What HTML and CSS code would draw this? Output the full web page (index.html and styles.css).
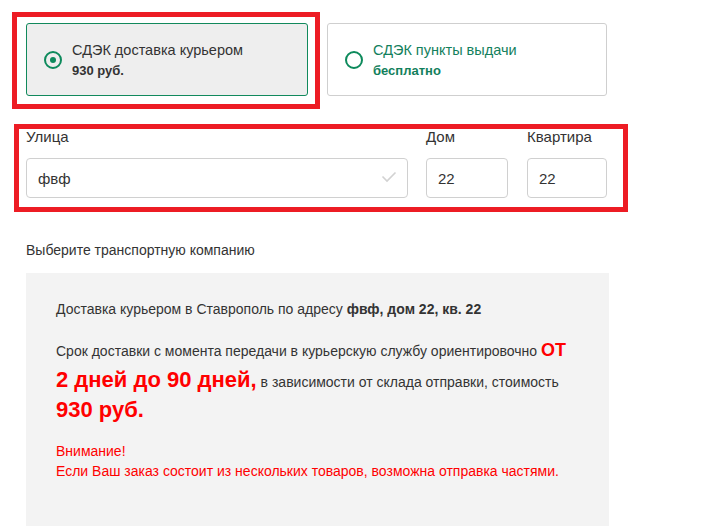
FILE: index.html
```html
<!DOCTYPE html>
<html lang="ru">
<head>
<meta charset="utf-8">
<link rel="stylesheet" href="styles.css">
</head>
<body>
<div class="page">
  <div class="cards">
    <div class="mark mark-cards">
      <label class="card card-active">
        <span class="radio radio-on"></span>
        <span class="card-text">
          <span class="card-title">СДЭК доставка курьером</span>
          <span class="card-price">930 руб.</span>
        </span>
      </label>
    </div>
    <label class="card card-idle">
      <span class="radio"></span>
      <span class="card-text">
        <span class="card-title green">СДЭК пункты выдачи</span>
        <span class="card-price green">бесплатно</span>
      </span>
    </label>
  </div>

  <div class="mark mark-form">
    <div class="form-row">
      <div class="field field-street">
        <div class="field-label">Улица</div>
        <div class="input">
          <span>фвф</span>
          <svg class="check" width="16" height="12" viewBox="0 0 16 12"><path d="M1.5 5.5 L6 10 L14.5 1.5" fill="none" stroke="#d2d2d2" stroke-width="1.6"/></svg>
        </div>
      </div>
      <div class="field field-house">
        <div class="field-label">Дом</div>
        <div class="input"><span>22</span></div>
      </div>
      <div class="field field-flat">
        <div class="field-label">Квартира</div>
        <div class="input"><span>22</span></div>
      </div>
    </div>
  </div>

  <div class="choose">Выберите транспортную компанию</div>

  <div class="info">
    <p class="addr">Доставка курьером в Ставрополь по адресу <b>фвф, дом 22, кв. 22</b></p>
    <p class="term">Срок доставки с момента передачи в курьерскую службу ориентировочно <b class="hot hot-sm">ОТ</b><br><b class="hot">2 дней до 90 дней,</b> в зависимости от склада отправки, стоимость<br><b class="hot">930 руб.</b></p>
    <p class="warn">Внимание!<br>Если Ваш заказ состоит из нескольких товаров, возможна отправка частями.</p>
  </div>
</div>
</body>
</html>
```

FILE: styles.css
```css
* { box-sizing: border-box; }
html, body { margin: 0; padding: 0; background: #fff; }
body {
  font-family: "Liberation Sans", Arial, sans-serif;
  color: #333;
  font-size: 14px;
}
.page {
  padding: 12px 0 0 12px;
  width: 640px;
}
.mark { border: 5px solid #ed1c24; }

.cards {
  display: flex;
  align-items: flex-start;
  gap: 7px;
}
.mark-cards {
  padding: 6px 7px 8px 9px;
  width: 308px;
}
.card {
  display: flex;
  align-items: center;
  height: 73px;
  border-radius: 3px;
  padding-left: 17px;
}
.card-active {
  width: 282px;
  background: #eeeeee;
  border: 1px solid #11895c;
}
.card-idle {
  width: 280px;
  margin-top: 11px;
  background: #fff;
  border: 1px solid #cfcfcf;
}
.radio {
  width: 18px;
  height: 18px;
  border: 2px solid #0d8a5c;
  border-radius: 50%;
  display: flex;
  align-items: center;
  justify-content: center;
  flex: none;
}
.radio-on::after {
  content: "";
  width: 6px;
  height: 6px;
  border-radius: 50%;
  background: #0d8a5c;
}
.card-text {
  display: flex;
  flex-direction: column;
  margin-left: 10px;
  margin-top: 1px;
}
.card-title { font-size: 14.5px; line-height: 18px; color: #333; }
.card-price { font-size: 13px; font-weight: bold; line-height: 16px; margin-top: 4px; color: #333; }
.green { color: #13805c; }

.mark-form {
  margin-top: 15px;
  margin-left: 2px;
  width: 614px;
  padding: 2px 16px 9px 7px;
}
.form-row {
  display: flex;
}
.field-label {
  font-size: 15px;
  line-height: 12px;
  height: 27px;
}
.field-street { width: 382px; }
.field-house { width: 82px; margin-left: 18px; }
.field-flat { width: 80px; margin-left: 19px; }
.input {
  height: 40px;
  border: 1px solid #d0d0d0;
  border-radius: 4px;
  display: flex;
  align-items: center;
  justify-content: space-between;
  padding: 0 10px 0 11px;
  font-size: 15px;
  color: #333;
}
.check { margin-top: -2px; }

.choose {
  margin: 28px 0 0 14px;
  font-size: 14px;
  line-height: 20px;
}
.info {
  margin: 13px 0 0 14px;
  width: 583px;
  height: 260px;
  background: #f3f3f3;
  padding: 26px 20px 0 30px;
}
.info p { margin: 0; }
.addr { font-size: 14px; line-height: 20px; }
.term {
  margin-top: 17px !important;
  font-size: 14px;
  line-height: 30.5px;
}
.hot { color: #ff0000; font-size: 22px; line-height: 22px; }
.hot-sm { font-size: 18px; }
.warn {
  margin-top: 13px !important;
  color: #ff0000;
  font-size: 14px;
  line-height: 20px;
}
```
